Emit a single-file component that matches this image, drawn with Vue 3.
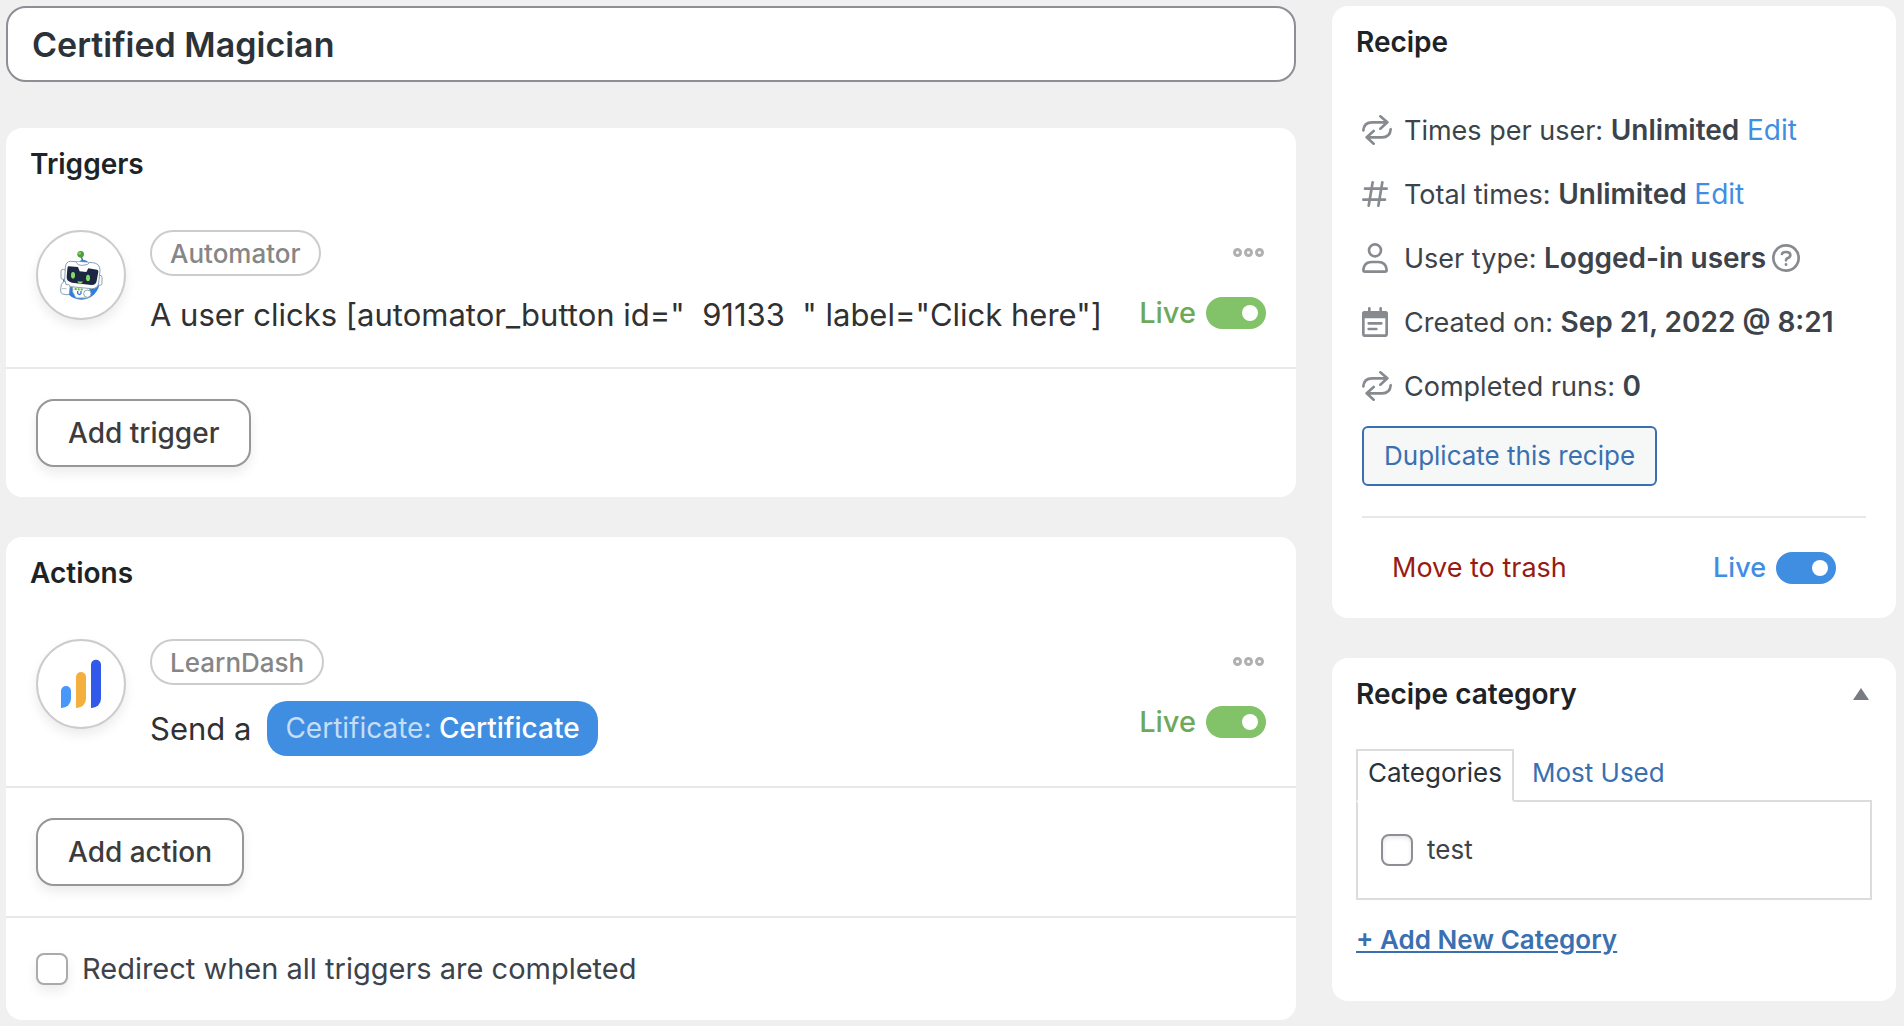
<script setup>
import { ref } from 'vue'

const title = ref('Certified Magician')
const triggerLive = ref(true)
const actionLive = ref(true)
const recipeLive = ref(true)
const redirect = ref(false)
const categories = ref([{ id: 'test', name: 'test', checked: false }])

const details = [
  { icon: 'repeat', label: 'Times per user:', value: 'Unlimited', edit: true },
  { icon: 'hash', label: 'Total times:', value: 'Unlimited', edit: true },
  { icon: 'user', label: 'User type:', value: 'Logged-in users', help: true },
  { icon: 'calendar', label: 'Created on:', value: 'Sep 21, 2022 @ 8:21' },
  { icon: 'repeat', label: 'Completed runs:', value: '0' },
]
</script>

<template>
  <div class="editor">
    <main class="column">
      <input v-model="title" class="title-input" type="text" aria-label="Recipe title" />

      <section class="card">
        <h2>Triggers</h2>
        <div class="item">
          <div class="avatar">
            <svg viewBox="0 0 258 258" aria-hidden="true">
              <circle cx="130" cy="148" r="55" fill="#2f7de0" />
              <path d="M130 74l5 16" stroke="#3b5f7d" stroke-width="4" />
              <circle cx="128" cy="67" r="10" fill="#4f9f3a" />
              <circle cx="125" cy="64" r="4" fill="#8ad06a" />
              <path d="M120 93q14-20 34 0z" fill="#2f7de0" />
              <g fill="#fff" stroke="#8aa2b3" stroke-width="3" stroke-linejoin="round">
                <rect x="69" y="112" width="14" height="30" rx="6" />
                <rect x="178" y="130" width="14" height="30" rx="6" />
                <path d="M104 160l48 4 6 18-10 16H114l-10-18z" />
                <path d="M98 88l66 4q22 2 22 23l-4 38q-3 18-22 17l-62-6q-18-2-18-20l2-38q2-18 16-18z" />
                <path d="M114 89q4 12 20 11 18-1 20-8" />
                <path d="M70 158q6-12 12-10l2 10h8q6 2 4 8l-2 18q-2 6-10 4l-10-2q-6-2-6-8 0-12 2-20z" />
                <circle cx="148" cy="185" r="11" />
              </g>
              <path
                d="M92 103l28 2 5 13 20 2 6-11 26 4q5 1 4 6l-5 28q-3 13-16 12l-58-7q-16-3-16-16l2-26q1-8 4-7z"
                fill="#1d2743"
              />
              <ellipse cx="105" cy="130" rx="6" ry="10" fill="#7fe060" />
              <ellipse cx="150" cy="138" rx="6" ry="10" fill="#7fe060" />
              <path d="M118 146q8 4 17 2-2 7-8 7-7-1-9-9z" fill="#7fe060" />
              <path d="M110 171l26 2" stroke="#57b33c" stroke-width="6" stroke-dasharray="6 3" />
              <path d="M119 177v7q5 7 10 0v-7" fill="none" stroke="#2f7de0" stroke-width="4" />
              <path d="M72 170h14" stroke="#8aa2b3" stroke-width="2" />
            </svg>
          </div>
          <div class="item-body">
            <span class="badge">Automator</span>
            <p class="sentence">
              A user clicks [automator_button id="&nbsp; 91133 &nbsp;" label="Click here"]
            </p>
          </div>
          <div class="item-side">
            <button class="more" type="button" aria-label="Trigger options">
              <i></i><i></i><i></i>
            </button>
            <label class="live">
              Live
              <input v-model="triggerLive" class="switch" type="checkbox" role="switch" />
            </label>
          </div>
        </div>
        <div class="row">
          <button class="add" type="button">Add trigger</button>
        </div>
      </section>

      <section class="card">
        <h2>Actions</h2>
        <div class="item">
          <div class="avatar">
            <svg viewBox="0 0 258 258" aria-hidden="true">
              <path d="M69 201V150a15 15 0 0 1 30 0V173a28 28 0 0 1-28 28z" fill="#4698fa" />
              <path d="M114 201V108a15 15 0 0 1 30 0V173a28 28 0 0 1-28 28z" fill="#f3b03f" />
              <path d="M159 201V71a15 15 0 0 1 30 0V173a28 28 0 0 1-28 28z" fill="#3159ea" />
            </svg>
          </div>
          <div class="item-body">
            <span class="badge">LearnDash</span>
            <p class="sentence with-token">
              Send a
              <button class="token" type="button"><span>Certificate:</span> Certificate</button>
            </p>
          </div>
          <div class="item-side">
            <button class="more" type="button" aria-label="Action options">
              <i></i><i></i><i></i>
            </button>
            <label class="live">
              Live
              <input v-model="actionLive" class="switch" type="checkbox" role="switch" />
            </label>
          </div>
        </div>
        <div class="row">
          <button class="add" type="button">Add action</button>
        </div>
        <div class="row">
          <label class="check redirect">
            <input v-model="redirect" type="checkbox" />
            Redirect when all triggers are completed
          </label>
        </div>
      </section>
    </main>

    <aside class="column sidebar">
      <section class="card">
        <h2>Recipe</h2>
        <div class="details">
          <ul>
            <li v-for="d in details" :key="d.label">
              <span class="icon">
                <svg v-if="d.icon === 'repeat'" width="30" height="30" viewBox="0 0 90 90">
                  <path d="M4 46Q6 22 30 22H74M55 4L76 22 55 41" />
                  <path d="M86 43Q84 67 60 67H16M35 48L14 67 35 86" />
                </svg>
                <svg v-else-if="d.icon === 'hash'" width="26" height="26" viewBox="0 0 78 78">
                  <path d="M9 23H74M4 56H69M32 4L20 74M61 4L49 74" />
                </svg>
                <svg v-else-if="d.icon === 'user'" width="26" height="30" viewBox="0 0 78 90">
                  <circle cx="39" cy="22" r="18" />
                  <path d="M9 86H69Q74 86 74 81 72 57 49 57H29Q6 57 4 81 4 86 9 86z" />
                </svg>
                <svg v-else width="26" height="30" viewBox="0 0 78 90">
                  <path d="M22 4V14M56 4V14M20 49H58M20 66H43" />
                  <rect x="4" y="16" width="70" height="70" rx="6" />
                  <path class="solid" d="M4 30V21q0-5 5-5h60q5 0 5 5v9z" />
                </svg>
              </span>
              <span>
                {{ d.label }} <strong>{{ d.value }}</strong>
                <template v-if="d.edit">&nbsp;<a href="#">Edit</a></template>
              </span>
              <button v-if="d.help" class="help" type="button" aria-label="About user types">
                <svg width="28" height="28" viewBox="0 0 84 84">
                  <circle cx="42" cy="42" r="38" />
                  <path d="M30 30q1-6 12-6 13 0 13 9 0 6-7 9-6 2-6 7" />
                  <path d="M42 61v1" />
                </svg>
              </button>
            </li>
          </ul>
          <button class="duplicate" type="button">Duplicate this recipe</button>
          <div class="publish">
            <a class="trash" href="#">Move to trash</a>
            <label class="live blue">
              Live
              <input v-model="recipeLive" class="switch" type="checkbox" role="switch" />
            </label>
          </div>
        </div>
      </section>

      <section class="card category">
        <header>
          <h2>Recipe category</h2>
          <button class="collapse" type="button" aria-label="Toggle panel">
            <svg width="16" height="12" viewBox="0 0 16 12"><path d="M8 0l8 12H0z" /></svg>
          </button>
        </header>
        <div class="category-body">
          <nav class="tabs">
            <a class="active" href="#">Categories</a>
            <a href="#">Most Used</a>
          </nav>
          <div class="panel">
            <label v-for="c in categories" :key="c.id" class="check">
              <input v-model="c.checked" type="checkbox" />
              {{ c.name }}
            </label>
          </div>
          <a class="add-category" href="#">+ Add New Category</a>
        </div>
      </section>
    </aside>
  </div>
</template>

<style>
body {
  margin: 0;
  background: #f0f0f0;
}
</style>

<style scoped>
.editor {
  display: grid;
  grid-template-columns: minmax(0, 1fr) 564px;
  gap: 36px;
  align-items: start;
  padding: 6px 8px 6px 6px;
  font-family: Inter, 'Liberation Sans', sans-serif;
  font-size: 27px;
  line-height: 36px;
  color: #3c434a;
}

.editor *,
.editor *::before {
  box-sizing: border-box;
}

button,
input {
  margin: 0;
  font: inherit;
  color: inherit;
}

button {
  cursor: pointer;
}

.column {
  display: flex;
  flex-direction: column;
  gap: 40px;
}

.title-input {
  width: 100%;
  height: 76px;
  margin-bottom: 6px;
  padding: 0 24px;
  border: 2px solid #8c8f94;
  border-radius: 20px;
  background: #fff;
  font-size: 34px;
  font-weight: 600;
  color: #2c3338;
}

.card {
  border-radius: 16px;
  background: #fff;
}

h2 {
  margin: 0;
  padding: 18px 24px;
  font-size: 28px;
  font-weight: 600;
  line-height: 36px;
  color: #1d2327;
}

/* trigger and action rows */
.item {
  display: flex;
  gap: 24px;
  padding: 30px;
}

.avatar {
  flex: none;
  width: 90px;
  height: 90px;
  border: 2px solid #ccc;
  border-radius: 50%;
  background: #fff;
  box-shadow: 0 6px 12px rgba(0, 0, 0, 0.08);
}

.avatar svg {
  display: block;
}

.item-body {
  display: flex;
  flex: 1;
  flex-direction: column;
  align-items: flex-start;
  gap: 16px;
  min-width: 0;
}

.badge {
  height: 46px;
  padding: 0 18px;
  border: 2px solid #ccc;
  border-radius: 23px;
  font-size: 26px;
  font-weight: 500;
  line-height: 44px;
  color: #868686;
}

.sentence {
  margin: 0;
  font-size: 31px;
  line-height: 45px;
  color: #303133;
}

.with-token {
  display: flex;
  align-items: center;
  gap: 16px;
}

.token {
  height: 55px;
  padding: 0 18px;
  border: 0;
  border-radius: 20px;
  background: #3f8ee2;
  font-size: 28px;
  font-weight: 500;
  color: #fff;
}

.token span {
  font-weight: 400;
  color: #c5ddf6;
}

.item-side {
  display: flex;
  flex-direction: column;
  align-items: flex-end;
  gap: 36px;
  padding-top: 16px;
}

.more {
  display: flex;
  gap: 2px;
  padding: 2px;
  border: 0;
  background: none;
}

.more i {
  width: 9px;
  height: 9px;
  border: 3px solid #b0b0b0;
  border-radius: 50%;
}

.live {
  display: flex;
  align-items: center;
  gap: 10px;
  font-size: 29px;
  font-weight: 500;
  line-height: 36px;
  color: #6ea95a;
}

.switch {
  appearance: none;
  display: flex;
  align-items: center;
  width: 60px;
  height: 32px;
  padding: 0 8px;
  border-radius: 16px;
  background: #bbb;
  cursor: pointer;
}

.switch::before {
  content: '';
  width: 16px;
  height: 16px;
  border-radius: 50%;
  background: #fff;
}

.switch:checked {
  justify-content: flex-end;
  background: #82c268;
}

.row {
  padding: 30px;
  border-top: 2px solid #e8e8e8;
}

.add {
  display: block;
  height: 68px;
  padding: 0 30px;
  border: 2px solid #979797;
  border-radius: 18px;
  background: #fff;
  box-shadow: 0 6px 12px rgba(0, 0, 0, 0.08);
  font-size: 28px;
  font-weight: 500;
  color: #3c3c3c;
}

.check {
  display: flex;
  align-items: center;
  gap: 14px;
}

.check input {
  appearance: none;
  width: 32px;
  height: 32px;
  border: 2px solid #8c8f94;
  border-radius: 8px;
  background: #fff;
  box-shadow: inset 0 2px 4px rgba(0, 0, 0, 0.1);
}

.check input:checked {
  background: #3f8ee2;
}

.redirect {
  height: 42px;
  font-size: 29px;
}

.redirect input {
  border-color: #aaa;
  box-shadow: 0 6px 12px rgba(0, 0, 0, 0.08);
}

/* sidebar */
.details {
  padding: 34px 30px 32px;
}

.details ul {
  display: flex;
  flex-direction: column;
  gap: 28px;
  margin: 0;
  padding: 0;
  list-style: none;
}

.details li {
  display: flex;
  align-items: center;
  height: 36px;
}

strong {
  font-size: 28px;
  font-weight: 600;
}

a {
  color: #3f8ee2;
  text-decoration: none;
}

.details li a {
  font-size: 28px;
}

.icon {
  width: 42px;
}

.icon svg,
.help svg {
  display: block;
  fill: none;
  stroke: #878a8f;
  stroke-width: 8;
  stroke-linecap: round;
  stroke-linejoin: round;
}

.icon .solid {
  fill: #878a8f;
}

.help {
  margin-left: 6px;
  padding: 0;
  border: 0;
  background: none;
}

.duplicate {
  display: block;
  height: 60px;
  margin-top: 22px;
  padding: 0 20px;
  border: 2px solid #3a70b0;
  border-radius: 6px;
  background: #f6f7f7;
  font-size: 26px;
  color: #3a70b0;
}

.publish {
  display: flex;
  align-items: center;
  justify-content: space-between;
  margin-top: 30px;
  padding: 32px 30px 0;
  border-top: 2px solid #e8e8e8;
}

.trash {
  color: #981b12;
}

.blue {
  font-size: 27px;
  color: #3f8ee2;
}

.blue .switch:checked {
  background: #3f8ee2;
}

.category header {
  display: flex;
  align-items: center;
  justify-content: space-between;
}

.collapse {
  padding: 27px;
  border: 0;
  background: none;
}

.collapse svg {
  display: block;
  fill: #787c82;
}

.category-body {
  padding: 19px 24px 43px;
}

.tabs {
  display: flex;
  font-size: 26px;
}

.tabs a {
  margin-bottom: -2px;
  padding: 4px 10px 9px 18px;
  border-top: 2px solid transparent;
  color: #3a70b0;
}

.tabs .active {
  z-index: 1;
  padding-left: 10px;
  border: 2px solid #dcdcde;
  border-bottom-color: #fff;
  color: #2c3338;
}

.panel {
  padding: 30px 23px;
  border: 2px solid #dcdcde;
  font-size: 26px;
}

.add-category {
  display: inline-block;
  margin-top: 22px;
  font-size: 26px;
  font-weight: 600;
  color: #3a70b0;
  text-decoration: underline;
}
</style>
